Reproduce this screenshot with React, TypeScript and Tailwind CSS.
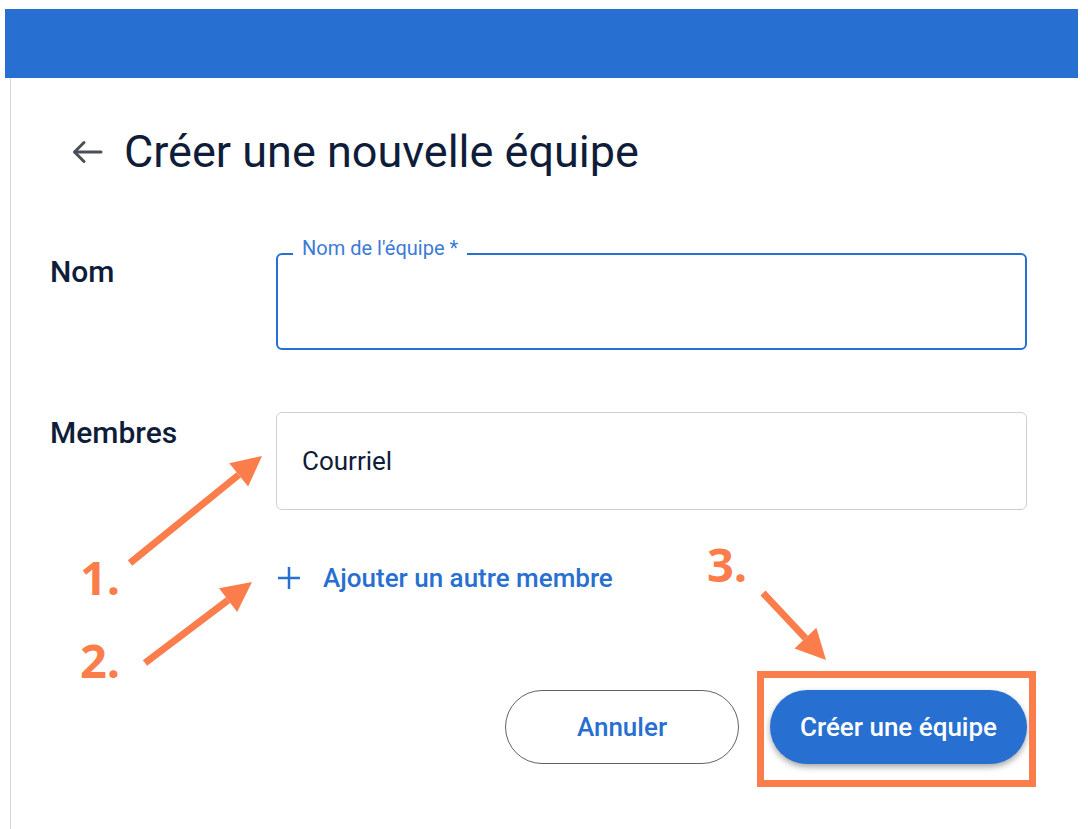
const ORANGE = '#fb7d4b';

function Arrow({ x1, y1, x2, y2 }: { x1: number; y1: number; x2: number; y2: number }) {
  // orange annotation arrow, head at (x2, y2)
  const a = Math.atan2(y2 - y1, x2 - x1);
  const len = 30;
  const w = 15;
  const bx = x2 - len * Math.cos(a);
  const by = y2 - len * Math.sin(a);
  const px = -Math.sin(a) * w;
  const py = Math.cos(a) * w;
  return (
    <g>
      <line x1={x1} y1={y1} x2={bx} y2={by} stroke={ORANGE} strokeWidth={7} />
      <polygon points={`${x2},${y2} ${bx + px},${by + py} ${bx - px},${by - py}`} fill={ORANGE} />
    </g>
  );
}

export default function App() {
  return (
    <div className="relative w-[1088px] h-[829px] bg-white overflow-hidden font-['Roboto',sans-serif]">
      <div className="pt-[9px] pl-[5px] pr-[10px]">
        <div className="h-[69px] bg-[#276fd1]" />
      </div>

      <div className="ml-[10px] border-l border-[#d4d4d4] h-[751px]">
        <div className="flex items-center gap-[21px] pl-[61px] pt-[48px]">
          <svg width="31" height="24" viewBox="0 0 31 24" fill="none" stroke="#4a4f57" strokeWidth="3" strokeLinecap="round" strokeLinejoin="round">
            <path d="M29 12H3" />
            <path d="M12 2.5L2.5 12L12 21.5" />
          </svg>
          <h1 className="text-[45px] leading-[52px] text-[#0f1d3a]">Créer une nouvelle équipe</h1>
        </div>

        <div className="flex mt-[75px] pl-[39px] pr-[61px]">
          <div className="w-[226px] pt-[1px] text-[30px] leading-[36px] font-medium text-[#0f1d3a]">Nom</div>
          <div className="relative flex-1 h-[97px] rounded-[6px] border-2 border-[#276fd1]">
            <span className="absolute left-[15px] top-[-19px] bg-white px-[9px] text-[20px] leading-[24px] text-[#3b7bd6]">
              Nom de l'équipe *
            </span>
          </div>
        </div>

        <div className="flex mt-[62px] pl-[39px] pr-[61px]">
          <div className="w-[226px] pt-[3px] text-[30px] leading-[36px] font-medium text-[#0f1d3a]">Membres</div>
          <div className="flex-1 h-[98px] rounded-[6px] border border-[#cfcfcf] flex items-center pl-[25px] text-[26px] text-[#0f1d3a]">
            Courriel
          </div>
        </div>

        <div className="flex items-center gap-[23px] mt-[53px] pl-[267px] h-[30px]">
          <svg width="22" height="22" viewBox="0 0 22 22" fill="none" stroke="#276fd1" strokeWidth="2.5">
            <path d="M11 0V22M0 11H22" />
          </svg>
          <span className="text-[26px] leading-[30px] font-medium text-[#276fd1]">Ajouter un autre membre</span>
        </div>

        <div className="flex justify-end gap-[31px] mt-[97px] pr-[61px]">
          <button className="w-[234px] h-[74px] rounded-full border border-[#5f6368] text-[26px] font-medium text-[#276fd1]">
            Annuler
          </button>
          <button className="w-[257px] h-[74px] rounded-full bg-[#276fd1] text-[26px] font-medium text-white shadow-[0_3px_6px_rgba(0,0,0,0.35)]">
            Créer une équipe
          </button>
        </div>
      </div>

      {/* annotations */}
      <div className="absolute left-[757px] top-[671px] w-[279px] h-[116px] border-[7px] border-[#fb7d4b]" />
      <svg className="absolute inset-0 pointer-events-none" width={1088} height={829}>
        <Arrow x1={130} y1={563} x2={262} y2={456} />
        <Arrow x1={145} y1={663} x2={252} y2={582} />
        <Arrow x1={763} y1={593} x2={826} y2={660} />
      </svg>
      <span className="absolute left-[80px] top-[554px] text-[47px] font-bold leading-none text-[#fb7d4b] font-['Open_Sans',sans-serif]">1.</span>
      <span className="absolute left-[80px] top-[637px] text-[47px] font-bold leading-none text-[#fb7d4b] font-['Open_Sans',sans-serif]">2.</span>
      <span className="absolute left-[707px] top-[541px] text-[47px] font-bold leading-none text-[#fb7d4b] font-['Open_Sans',sans-serif]">3.</span>
    </div>
  );
}
